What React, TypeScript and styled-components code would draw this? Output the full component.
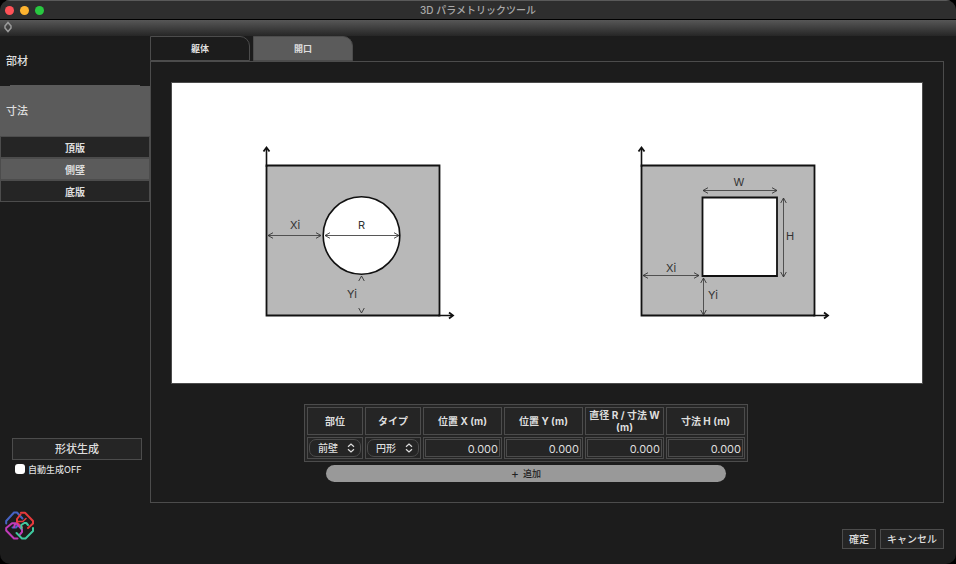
import React, { useState } from "react";
import styled, { createGlobalStyle } from "styled-components";

const sans = `Inter, "Noto Sans CJK JP", sans-serif`;

const GlobalStyle = createGlobalStyle`
  *, *::before, *::after { box-sizing: border-box; }
  body { margin: 0; background: #000; font-family: ${sans}; color: #dedede; }
  button, input, select { font-family: inherit; color: inherit; margin: 0; }
`;

const Window = styled.div`
  min-height: 100vh;
  display: flex;
  flex-direction: column;
  background: #1c1c1c;
  border-radius: 10px;
  overflow: hidden;
`;

const TitleBar = styled.header`
  display: grid;
  grid-template-columns: 1fr auto 1fr;
  align-items: center;
  height: 20px;
  padding: 0 5px;
  background: #2e2e2e;
  border-top: 1px solid #5a5a5a;
  border-bottom: 1px solid #000;
`;

const Lights = styled.div`
  display: flex;
  gap: 6px;
`;

const Light = styled.button<{ $color: string }>`
  width: 9px;
  height: 9px;
  padding: 0;
  border: 0;
  border-radius: 50%;
  background: ${(p) => p.$color};
`;

const Title = styled.h1`
  margin: 0;
  font-size: 10px;
  line-height: 18px;
  font-weight: 500;
  color: #a9a9a9;
`;

const Toolbar = styled.div`
  display: flex;
  align-items: center;
  height: 16px;
  padding: 0 4px 2px;
  background: linear-gradient(#575757, #262626);
`;

const ToolbarToggle = styled.button`
  display: flex;
  padding: 0;
  border: 0;
  background: none;
  color: #9a9a9a;
`;

const Body = styled.div`
  flex: 1;
  display: grid;
  grid-template-columns: 150px minmax(0, 1fr);
`;

const Sidebar = styled.aside`
  display: flex;
  flex-direction: column;
`;

const Section = styled.button<{ $active?: boolean }>`
  height: 50px;
  padding: 0 6px 2px;
  border: 0;
  text-align: left;
  font-size: 11px;
  font-weight: 500;
  background: ${(p) => (p.$active ? "#5b5b5b" : "transparent")};
`;

const Divider = styled.hr`
  width: 130px;
  height: 1px;
  margin: -1px auto 0;
  border: 0;
  background: #5b5b5b;
`;

const PartList = styled.div`
  display: flex;
  flex-direction: column;
`;

const PartButton = styled.button<{ $active?: boolean }>`
  height: 22px;
  padding: 0;
  border: 1px solid #4c4c4c;
  font-size: 10px;
  font-weight: 700;
  background: ${(p) => (p.$active ? "#5b5b5b" : "#252525")};
`;

const SidebarFoot = styled.div`
  display: flex;
  flex-direction: column;
  align-items: flex-start;
  margin-top: auto;
  padding: 0 8px 24px 5px;
`;

const BoxButton = styled.button`
  height: 20px;
  padding: 0 6px;
  border: 1px solid #4c4c4c;
  background: #252525;
  font-size: 10px;
  font-weight: 500;
  line-height: 16px;
  white-space: nowrap;
`;

const GenerateButton = styled(BoxButton)`
  align-self: stretch;
  height: 22px;
  margin-left: 7px;
  font-size: 11px;
`;

const AutoLabel = styled.label`
  display: flex;
  align-items: center;
  gap: 3px;
  height: 18px;
  margin: 0 0 33px 10px;
  font-size: 9px;
  font-weight: 500;
`;

const CheckBox = styled.input`
  appearance: none;
  width: 10px;
  height: 10px;
  border-radius: 3px;
  background: #fff;
  &:checked { background: #3b82f6; }
`;

const Main = styled.main`
  display: flex;
  flex-direction: column;
  min-width: 0;
  padding-right: 12px;
`;

const Tabs = styled.div`
  display: flex;
  gap: 3px;
`;

const Tab = styled.button<{ $active?: boolean }>`
  width: 100px;
  height: 25px;
  padding: 0;
  border: 1px solid #4c4c4c;
  border-top-right-radius: 10px;
  font-size: 9px;
  font-weight: 700;
  background: ${(p) => (p.$active ? "#5b5b5b" : "transparent")};
`;

const Panel = styled.section`
  flex: 1;
  display: flex;
  flex-direction: column;
  padding: 20px;
  border: 1px solid #4c4c4c;
`;

const Figure = styled.figure`
  margin: 0 0 20px;
  border: 1px solid #4c4c4c;
  background: #fff;
  svg { display: block; width: 100%; height: auto; }
`;

const Entry = styled.div`
  display: flex;
  flex-direction: column;
  align-items: center;
  gap: 3px;
  margin: 0 22px 0 -20px;
`;

const Table = styled.table`
  table-layout: fixed;
  width: 444px;
  border: 1px solid #4c4c4c;
  border-collapse: separate;
  border-spacing: 2px;
  background: #252525;
`;

const Col = styled.col<{ $w: number }>`
  width: ${(p) => p.$w}px;
`;

const Th = styled.th`
  height: 28px;
  padding: 0;
  border: 1px solid #4c4c4c;
  font-size: 10px;
  line-height: 12px;
  font-weight: 700;
`;

const Td = styled.td`
  height: 22px;
  padding: 1px;
  border: 1px solid #4c4c4c;
`;

const SelectBox = styled.span`
  display: grid;
  align-items: center;
  > * { grid-area: 1 / 1; }
  svg { justify-self: end; margin-right: 6px; pointer-events: none; }
`;

const Select = styled.select`
  appearance: none;
  width: 100%;
  height: 18px;
  padding: 0 8px;
  border: 1px solid #4c4c4c;
  border-radius: 7px;
  background: #252525;
  font-size: 10px;
  font-weight: 500;
`;

const NumberInput = styled.input`
  display: block;
  width: 100%;
  height: 18px;
  padding: 1px 1px 0;
  border: 1px solid #4c4c4c;
  background: #252525;
  font-size: 11px;
  text-align: right;
`;

const AddButton = styled.button`
  width: 400px;
  height: 17px;
  padding: 0;
  border: 0;
  border-radius: 9px;
  background: #999;
  color: #222;
  font-size: 9px;
  font-weight: 500;
  line-height: 16px;
`;

const AddContent = styled.span`
  display: flex;
  align-items: center;
  justify-content: center;
  gap: 4px;
`;

const Plus = styled.span`
  font-size: 12px;
  font-weight: 400;
`;

const Footer = styled.footer`
  display: flex;
  justify-content: flex-end;
  gap: 4px;
  padding: 26px 0 15px;
`;

const UpDown = () => (
  <svg width="8" height="10" viewBox="0 0 8 10" fill="none" stroke="currentColor" strokeWidth="1.2" aria-hidden="true">
    <path d="M1 3.700 4 1l3 2.700M1 6.300 4 9l3-2.700" />
  </svg>
);

const Diamond = () => (
  <svg width="8" height="12" viewBox="0 0 8 12" fill="none" stroke="currentColor" strokeWidth="1.500" aria-hidden="true">
    <path d="M1 5 4 1.500 7 5M1 7l3 3.500L7 7M1 4.500v3M7 4.500v3" />
  </svg>
);

const Logo = () => (
  <svg width="29" height="29" viewBox="0 0 29 29" fill="none" strokeWidth="2" strokeLinecap="round" strokeLinejoin="round" role="img" aria-label="logo">
    <path stroke="#4763c4" d="M1.200 12.500V10L9 1.500h3l5.500 6M7.500 16.500H11l2.500-3" />
    <path stroke="#e63a3c" d="M16 1.800h4L28 10v2.500l-5 4.500M15.500 3.500 12 8v3.500l5 5" />
    <path stroke="#c03bb8" d="M9 16.200l1.500-4H7L1.200 17v2.500L9 27.500h3.500M12 13l5 5.500V21l-2.500 3" />
    <path stroke="#3fc99f" d="M28 17v3l-7.500 7.500H17L11.500 22M16.500 17.500 16.300 14l3-2h2L23 14" />
    <path stroke="#e63a3c" d="M21 7.500 17.800 10.500 12.500 10.500" strokeWidth="1.600" />
  </svg>
);

const arrow = { markerStart: "url(#thin)", markerEnd: "url(#thin)" };

const Frame = () => (
  <g stroke="#111" strokeWidth="1.8">
    <path fill="#b8b8b8" d="M94.500 82.500h173v150h-173z" />
    <path fill="none" strokeWidth="1.600" d="M94.500 84V65M266 232.500h14" />
    <path fill="none" d="m91.500 68.500 3-4 3 4M277 229.500l4 3-4 3" />
  </g>
);

const Diagram = () => (
  <svg viewBox="0 0 750 300" role="img" aria-label="開口寸法図">
    <defs>
      <marker id="thin" viewBox="-6 -4 7 8" refX="0" refY="0" markerWidth="7" markerHeight="8" orient="auto-start-reverse" markerUnits="userSpaceOnUse">
        <path d="M-5-2.800 0 0l-5 2.800" fill="none" stroke="#333" strokeWidth="0.900" />
      </marker>
    </defs>
    <Frame />
    <ellipse cx="189.500" cy="152.500" rx="38.300" ry="38.800" fill="#fff" stroke="#111" strokeWidth="1.600" />
    <g stroke="#444" strokeWidth="0.900">
      <path d="M96 152.500h53" {...arrow} />
      <path d="M153 152.500h74" {...arrow} />
      <path d="M189.500 193v37" stroke="none" {...arrow} />
    </g>
    <g transform="translate(375 0)">
      <Frame />
      <path d="M155.500 114.500h74.500v78.500h-74.500z" fill="#fff" stroke="#111" strokeWidth="1.800" />
      <g stroke="#444" strokeWidth="0.900">
        <path d="M156 107.500h74" {...arrow} />
        <path d="M236.500 115v79" {...arrow} />
        <path d="M96 192.500h56" {...arrow} />
        <path d="M156.500 195v37" {...arrow} />
      </g>
    </g>
    <g fill="#333" fontFamily={sans} fontSize="11" textAnchor="middle">
      <text x="123" y="146">Xi</text>
      <text x="189.500" y="146">R</text>
      <text x="180" y="215">Yi</text>
      <text x="567" y="103">W</text>
      <text x="618" y="157">H</text>
      <text x="499" y="189">Xi</text>
      <text x="541" y="216">Yi</text>
    </g>
  </svg>
);

const numberColumns = ["位置 X (m)", "位置 Y (m)", "直径 R / 寸法 W (m)", "寸法 H (m)"];

export default function App() {
  const [tab, setTab] = useState("開口");
  const [part, setPart] = useState("側壁");
  return (
    <>
      <GlobalStyle />
      <Window>
        <TitleBar>
          <Lights>
            <Light $color="#ff5257" aria-label="閉じる" />
            <Light $color="#fdb32f" aria-label="最小化" />
            <Light $color="#28c840" aria-label="拡大" />
          </Lights>
          <Title>3D パラメトリックツール</Title>
        </TitleBar>
        <Toolbar>
          <ToolbarToggle aria-label="切替"><Diamond /></ToolbarToggle>
        </Toolbar>
        <Body>
          <Sidebar>
            <Section>部材</Section>
            <Divider />
            <Section $active>寸法</Section>
            <PartList>
              {["頂版", "側壁", "底版"].map((name) => (
                <PartButton key={name} $active={name === part} onClick={() => setPart(name)}>{name}</PartButton>
              ))}
            </PartList>
            <SidebarFoot>
              <GenerateButton>形状生成</GenerateButton>
              <AutoLabel><CheckBox type="checkbox" />自動生成OFF</AutoLabel>
              <Logo />
            </SidebarFoot>
          </Sidebar>
          <Main>
            <Tabs role="tablist">
              {["躯体", "開口"].map((name) => (
                <Tab key={name} role="tab" aria-selected={name === tab} $active={name === tab} onClick={() => setTab(name)}>{name}</Tab>
              ))}
            </Tabs>
            <Panel>
              <Figure><Diagram /></Figure>
              <Entry>
                <Table>
                  <colgroup>
                    {[56, 56, 79, 79, 79, 79].map((w, i) => <Col key={i} $w={w} />)}
                  </colgroup>
                  <thead>
                    <tr>
                      <Th>部位</Th>
                      <Th>タイプ</Th>
                      {numberColumns.map((c) => <Th key={c}>{c}</Th>)}
                    </tr>
                  </thead>
                  <tbody>
                    <tr>
                      <Td>
                        <SelectBox>
                          <Select aria-label="部位"><option>前壁</option></Select>
                          <UpDown />
                        </SelectBox>
                      </Td>
                      <Td>
                        <SelectBox>
                          <Select aria-label="タイプ"><option>円形</option></Select>
                          <UpDown />
                        </SelectBox>
                      </Td>
                      {numberColumns.map((c) => (
                        <Td key={c}><NumberInput aria-label={c} defaultValue="0.000" /></Td>
                      ))}
                    </tr>
                  </tbody>
                </Table>
                <AddButton><AddContent><Plus>+</Plus>追加</AddContent></AddButton>
              </Entry>
            </Panel>
            <Footer>
              <BoxButton>確定</BoxButton>
              <BoxButton>キャンセル</BoxButton>
            </Footer>
          </Main>
        </Body>
      </Window>
    </>
  );
}
